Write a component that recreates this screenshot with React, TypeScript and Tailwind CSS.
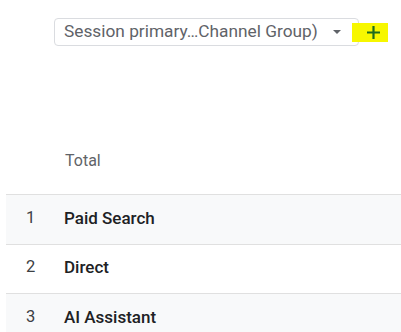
const rows = [
  { n: 1, name: "Paid Search" },
  { n: 2, name: "Direct" },
  { n: 3, name: "AI Assistant" },
];

export default function App() {
  return (
    <div className="w-[401px] h-[332px] overflow-hidden bg-white font-['Roboto',sans-serif]">
      <div className="flex items-center pt-[18px] pl-[54px]">
        <div className="flex items-center w-[305px] h-[28px] border border-[#dadce0] rounded-[4px] pl-[9px] pr-[17px] bg-white">
          <span className="flex-1 text-[17.3px] leading-none text-[#5f6368] whitespace-nowrap">
            Session primary…Channel Group)
          </span>
          <svg width="8" height="4" viewBox="0 0 8 4">
            <path d="M0 0h8L4 4z" fill="#5f6368" />
          </svg>
        </div>
        <div className="-ml-[7px] w-[36px] h-[19px] bg-[#f7f700] flex items-center justify-center pl-[6px]">
          <svg width="15" height="15" viewBox="0 0 15 15">
            <path d="M7.5 1v13M1 7.5h13" stroke="#1e6b1e" strokeWidth="2.2" />
          </svg>
        </div>
      </div>

      <div className="ml-[6px] mt-[103px]">
        <div className="pl-[59px] pb-[21px] text-[16px] leading-[24px] text-[#5f6368]">Total</div>
        {rows.map((r) => (
          <div
            key={r.n}
            className={`flex items-center h-[49.5px] pb-[2px] border-t border-[#e0e0e0] ${r.n % 2 === 1 ? "bg-[#f8f9fa]" : "bg-white"}`}
          >
            <span className="w-[58px] pl-[20px] text-[16.5px] text-[#3c4043]">{r.n}</span>
            <span className="text-[17px] font-medium text-[#202124]">{r.name}</span>
          </div>
        ))}
      </div>
    </div>
  );
}
